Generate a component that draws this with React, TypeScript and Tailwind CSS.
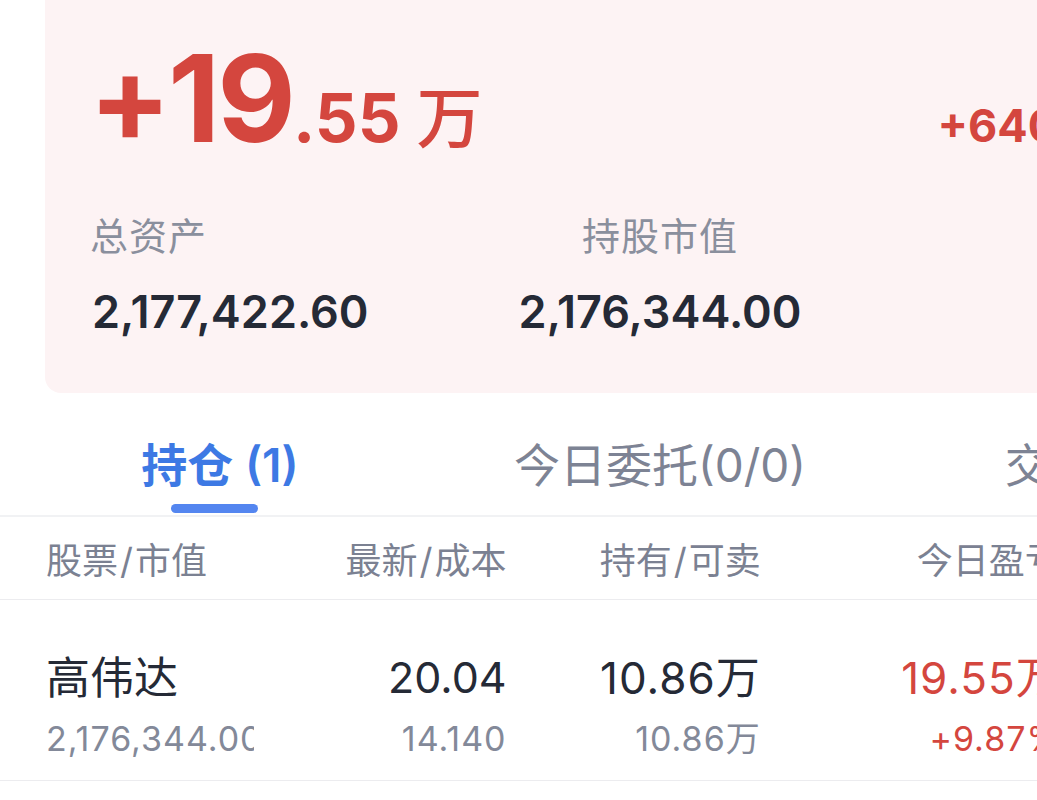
import React from "react";

const RED = "text-[#d4463e]";

function Slash() {
  return <span className="mx-[2px]">/</span>;
}

export default function App() {
  return (
    <div className="w-[1037px] h-[800px] overflow-hidden bg-white font-['Inter','Noto_Sans_CJK_SC',sans-serif]">
      <div className="w-[1320px]">
        {/* Summary card */}
        <div className="mx-[45px] h-[393px] rounded-b-[16px] bg-[#fdf3f4] pl-[47px] pr-[47px] pt-[38px]">
          <div className="flex items-baseline">
            <div className={`-ml-[3px] flex items-baseline font-bold ${RED}`}>
              <span className="text-[121px] leading-none tracking-[-3px]">+19</span>
              <span className="text-[67px] leading-none">.55</span>
              <span className="ml-[16px] text-[66px] leading-none font-medium">万</span>
            </div>
            <div className={`ml-auto text-[45px] leading-none font-bold ${RED}`}>+640,740.00</div>
          </div>
          <div className="mt-[58px] grid grid-cols-3 text-[38px] leading-none tracking-[1px] text-[#8a8f9d]">
            <div className="-ml-[2px]">总资产</div>
            <div className="text-center">持股市值</div>
            <div className="text-right">可用资金</div>
          </div>
          <div className="mt-[34px] grid grid-cols-3 text-[45px] leading-none font-semibold text-[#252a36]">
            <div>2,177,422.60</div>
            <div className="text-center">2,176,344.00</div>
            <div className="text-right">1,078.60</div>
          </div>
        </div>

        {/* Tabs */}
        <div className="grid grid-cols-3 pt-[49px]">
          <div className="flex flex-col items-center">
            <div className="text-[46px] leading-none font-semibold text-[#3d79e4]">持仓 (1)</div>
            <div className="mt-[16px] mr-[12px] h-[9px] w-[87px] rounded-full bg-[#5486f0]" />
          </div>
          <div className="flex flex-col items-center">
            <div className="text-[46px] leading-none text-[#7d8394]">今日委托(0/0)</div>
          </div>
          <div className="flex flex-col items-center">
            <div className="ml-[10px] text-[46px] leading-none text-[#7d8394]">交割单(0)</div>
          </div>
        </div>
        <div className="mt-[2px] h-[2px] bg-[#f1f2f4]" />

        {/* Table header */}
        <div className="flex h-[83px] items-center border-b border-[#ececef] pl-[46px] pt-[6px] text-[36px] leading-none text-[#7b8192]">
          <div className="w-[209px]">股票<Slash />市值</div>
          <div className="w-[253px] text-right">最新<Slash />成本</div>
          <div className="w-[255px] text-right">持有<Slash />可卖</div>
          <div className="w-[301px] text-right">今日盈亏</div>
          <div className="w-[260px] text-right">持仓盈亏</div>
        </div>

        {/* Row */}
        <div className="flex h-[181px] border-b border-[#ececef] pl-[46px] pt-[56px]">
          <div className="w-[209px] overflow-hidden whitespace-nowrap">
            <div className="text-[44px] leading-none text-[#252a36]">高伟达</div>
            <div className="mt-[22px] text-[34px] leading-none tracking-[1px] text-[#838999]">2,176,344.00</div>
          </div>
          <div className="w-[253px] text-right">
            <div className="text-[43px] leading-none text-[#252a36]">20.04</div>
            <div className="mt-[23px] text-[34px] leading-none tracking-[1px] text-[#838999]">14.140</div>
          </div>
          <div className="w-[255px] text-right">
            <div className="text-[44px] leading-none tracking-[1px] text-[#252a36]">10.86万</div>
            <div className="mt-[22px] text-[34px] leading-none tracking-[1px] text-[#838999]">10.86万</div>
          </div>
          <div className={`w-[301px] text-right ${RED}`}>
            <div className="text-[44px] leading-none tracking-[1px]">19.55万</div>
            <div className="mt-[22px] text-[34px] leading-none tracking-[1px]">+9.87%</div>
          </div>
          <div className={`w-[260px] text-right ${RED}`}>
            <div className="text-[44px] leading-none">64.07万</div>
            <div className="mt-[22px] text-[34px] leading-none tracking-[1px]">+41.72%</div>
          </div>
        </div>
      </div>
    </div>
  );
}
